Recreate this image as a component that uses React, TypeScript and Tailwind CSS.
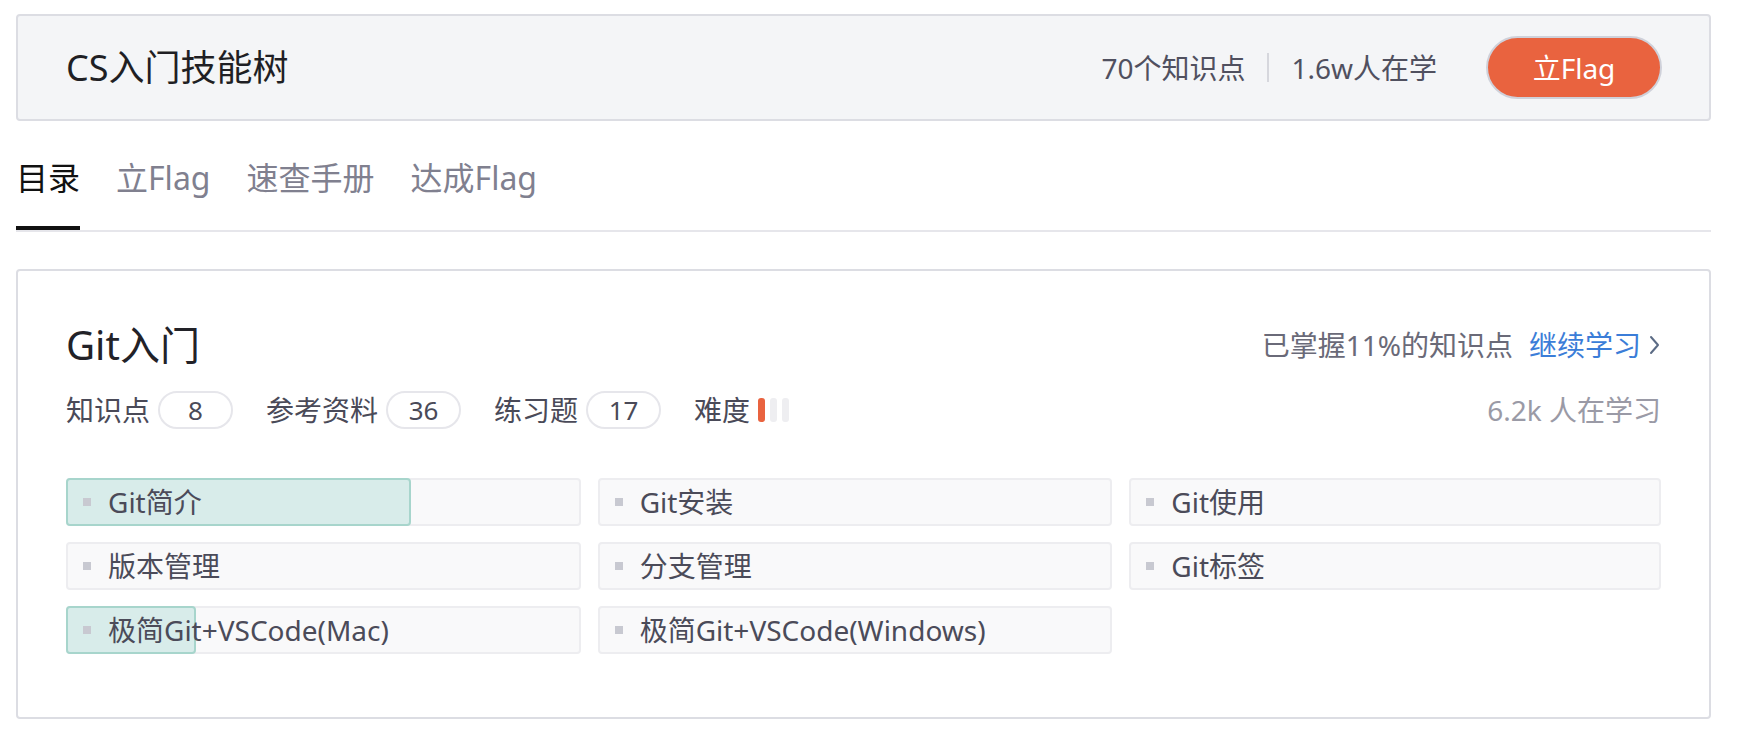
import React from "react";

type Item = { title: string; progress?: number };

const items: Item[] = [
  { title: "Git简介", progress: 0.675 },
  { title: "Git安装" },
  { title: "Git使用" },
  { title: "版本管理" },
  { title: "分支管理" },
  { title: "Git标签" },
  { title: "极简Git+VSCode(Mac)", progress: 0.255 },
  { title: "极简Git+VSCode(Windows)" },
];

const tabs = ["目录", "立Flag", "速查手册", "达成Flag"];

function StatPill({ label, value }: { label: string; value: number }) {
  return (
    <div className="flex items-center mr-[33px]">
      <span className="text-[28px] leading-[38px] text-[#4a4a58]">{label}</span>
      <span className="ml-[8px] w-[75px] h-[38px] rounded-full border-2 border-[#e6e6eb] flex items-center justify-center text-[26px] text-[#4a4a58]">
        {value}
      </span>
    </div>
  );
}

function TopicItem({ item }: { item: Item }) {
  return (
    <div className="relative h-[48px] border-2 border-[#ededf0] bg-[#f9f9fa] rounded-[4px] flex items-center pl-[15px]">
      {/* progress highlight */}
      {item.progress ? (
        <div
          className="absolute -left-[2px] -top-[2px] -bottom-[2px] bg-[#d8ecea] border-2 border-[#a7d5cc] rounded-[4px]"
          style={{ width: `${item.progress * 100}%` }}
        />
      ) : null}
      <span className="relative w-[8px] h-[8px] bg-[#c8c9d1]" />
      <span className="relative ml-[17px] text-[28px] leading-[40px] text-[#4b4b59] whitespace-nowrap">
        {item.title}
      </span>
    </div>
  );
}

export default function App() {
  return (
    <div className="min-h-screen bg-white pt-[14px] pl-[16px] pr-[27px] font-['Noto_Sans','Noto_Sans_CJK_SC',sans-serif]">
      {/* Header */}
      <header className="flex items-center justify-between h-[107px] border-2 border-[#dcdde3] rounded-[4px] bg-[#f4f5f7] pl-[48px] pr-[47px]">
        <h1 className="text-[36px] leading-[48px] text-[#1f1f24]">CS入门技能树</h1>
        <div className="flex items-center text-[28px] leading-[40px] text-[#50505f]">
          <span>70个知识点</span>
          <span className="mx-[22px] w-[2px] h-[29px] bg-[#d6d7dd]" />
          <span>1.6w人在学</span>
          <button className="ml-[49px] w-[176px] h-[63px] rounded-full bg-[#e9633f] border-2 border-[#cfd1da] text-white text-[28px] leading-[40px]">
            立Flag
          </button>
        </div>
      </header>

      {/* Tabs */}
      <nav className="mt-[35px] flex gap-[36px] border-b-2 border-[#e6e6eb]">
        {tabs.map((t, i) => (
          <div
            key={t}
            className={
              i === 0
                ? "text-[32px] leading-[44px] pb-[26px] border-b-4 border-[#111111] text-[#111111]"
                : "text-[32px] leading-[44px] pb-[26px] border-b-4 border-transparent text-[#80808f]"
            }
          >
            {t}
          </div>
        ))}
      </nav>

      {/* Course card */}
      <section className="mt-[37px] border-2 border-[#dcdde3] rounded-[4px] px-[48px] pt-[50px] pb-[63px]">
        <div className="flex items-center justify-between">
          <h2 className="text-[40px] leading-[48px] text-[#222228]">Git入门</h2>
          <div className="flex items-center text-[28px] leading-[40px]">
            <span className="text-[#6a6a78]">已掌握11%的知识点</span>
            <a className="ml-[16px] text-[#3b7dd8] flex items-center">
              继续学习
              <svg width="14" height="20" viewBox="0 0 14 20" fill="none" stroke="#5b6b85" strokeWidth="2" strokeLinecap="round" strokeLinejoin="round" className="ml-[6px]">
                <path d="M4 2L11 10L4 18" />
              </svg>
            </a>
          </div>
        </div>

        <div className="mt-[22px] flex items-center justify-between">
          <div className="flex items-center">
            <StatPill label="知识点" value={8} />
            <StatPill label="参考资料" value={36} />
            <StatPill label="练习题" value={17} />
            <span className="text-[28px] leading-[38px] text-[#4a4a58]">难度</span>
            <div className="ml-[8px] flex gap-[5px]">
              <span className="w-[7px] h-[24px] rounded-[3px] bg-[#e9633f]" />
              <span className="w-[7px] h-[24px] rounded-[3px] bg-[#eeeef1]" />
              <span className="w-[7px] h-[24px] rounded-[3px] bg-[#eeeef1]" />
            </div>
          </div>
          <span className="text-[28px] leading-[38px] text-[#9a9aa6]">6.2k 人在学习</span>
        </div>

        <div className="mt-[49px] grid grid-cols-3 gap-y-[16px]">
          {items.map((item, i) => (
            <div key={item.title} className={i % 3 === 2 ? "" : "pr-[17px]"}>
              <TopicItem item={item} />
            </div>
          ))}
        </div>
      </section>
    </div>
  );
}
